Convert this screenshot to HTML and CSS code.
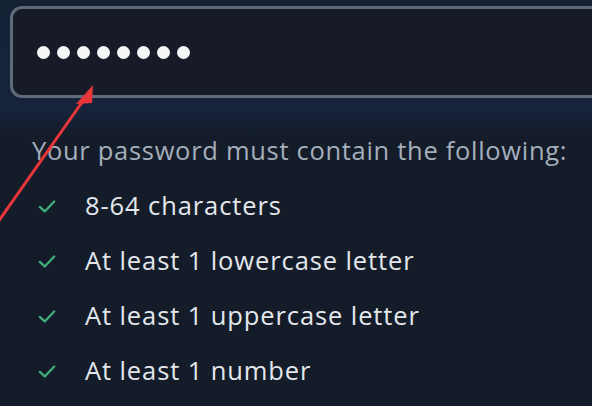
FILE: index.html
```html
<!DOCTYPE html>
<html lang="en">
<head>
    <meta charset="UTF-8">
    <meta name="viewport" content="width=device-width, initial-scale=1.0">
    <title>Password</title>
    <link rel="stylesheet" href="styles.css">
</head>
<body>
    <div class="page">
        <div class="field">
            <div class="dots">
                <span></span><span></span><span></span><span></span>
                <span></span><span></span><span></span><span></span>
            </div>
        </div>

        <div class="rules">
            <p class="rules-title">Your password must contain the following:</p>
            <ul>
                <li><svg class="check" viewBox="0 0 20 16"><path d="M2 8.5 L7.5 13.5 L18 2.5"/></svg>8-64 characters</li>
                <li><svg class="check" viewBox="0 0 20 16"><path d="M2 8.5 L7.5 13.5 L18 2.5"/></svg>At least 1 lowercase letter</li>
                <li><svg class="check" viewBox="0 0 20 16"><path d="M2 8.5 L7.5 13.5 L18 2.5"/></svg>At least 1 uppercase letter</li>
                <li><svg class="check" viewBox="0 0 20 16"><path d="M2 8.5 L7.5 13.5 L18 2.5"/></svg>At least 1 number</li>
            </ul>
        </div>

        <!-- red annotation arrow drawn over the screenshot -->
        <svg class="arrow" width="592" height="406" viewBox="0 0 592 406">
            <line x1="-2" y1="222" x2="85" y2="98" />
            <polygon points="93,85 76,104 92,103" />
        </svg>
    </div>
</body>
</html>
```

FILE: styles.css
```css
body {
    margin: 0;
    background-color: #141c2a;
    font-family: "Open Sans", Lato, sans-serif;
}

.page {
    position: relative;
    height: 406px;
    overflow: hidden;
    background: linear-gradient(to bottom, #152236 0, #16233a 110px, #141c2a 135px);
}

.field {
    margin: 6px -30px 0 10px;
    height: 92px;
    box-sizing: border-box;
    border: 3px solid #5f6a7a;
    border-radius: 12px;
    background-color: #161b27;
    display: flex;
    align-items: center;
    padding-left: 24px;
}

.dots {
    display: flex;
    gap: 7px;
}

.dots span {
    width: 13px;
    height: 13px;
    border-radius: 50%;
    background-color: #f4f5f7;
}

.rules {
    padding-left: 32px;
    padding-top: 25px;
}

.rules-title {
    margin: 0;
    font-size: 25.5px;
    letter-spacing: 0.7px;
    line-height: 55px;
    color: #a5aebb;
}

ul {
    list-style: none;
    margin: 0;
    padding: 0;
}

li {
    display: flex;
    align-items: center;
    font-size: 25.5px;
    letter-spacing: 0.9px;
    line-height: 55px;
    color: #e3e7ec;
}

.check {
    width: 18px;
    height: 15px;
    margin: 2px 29px 0 6px;
    fill: none;
    stroke: #3fae7b;
    stroke-width: 2.6;
    stroke-linecap: round;
    stroke-linejoin: round;
}

.arrow {
    position: absolute;
    left: 0;
    top: 0;
}

.arrow line {
    stroke: #e8363a;
    stroke-width: 3;
}

.arrow polygon {
    fill: #e8363a;
}
```
